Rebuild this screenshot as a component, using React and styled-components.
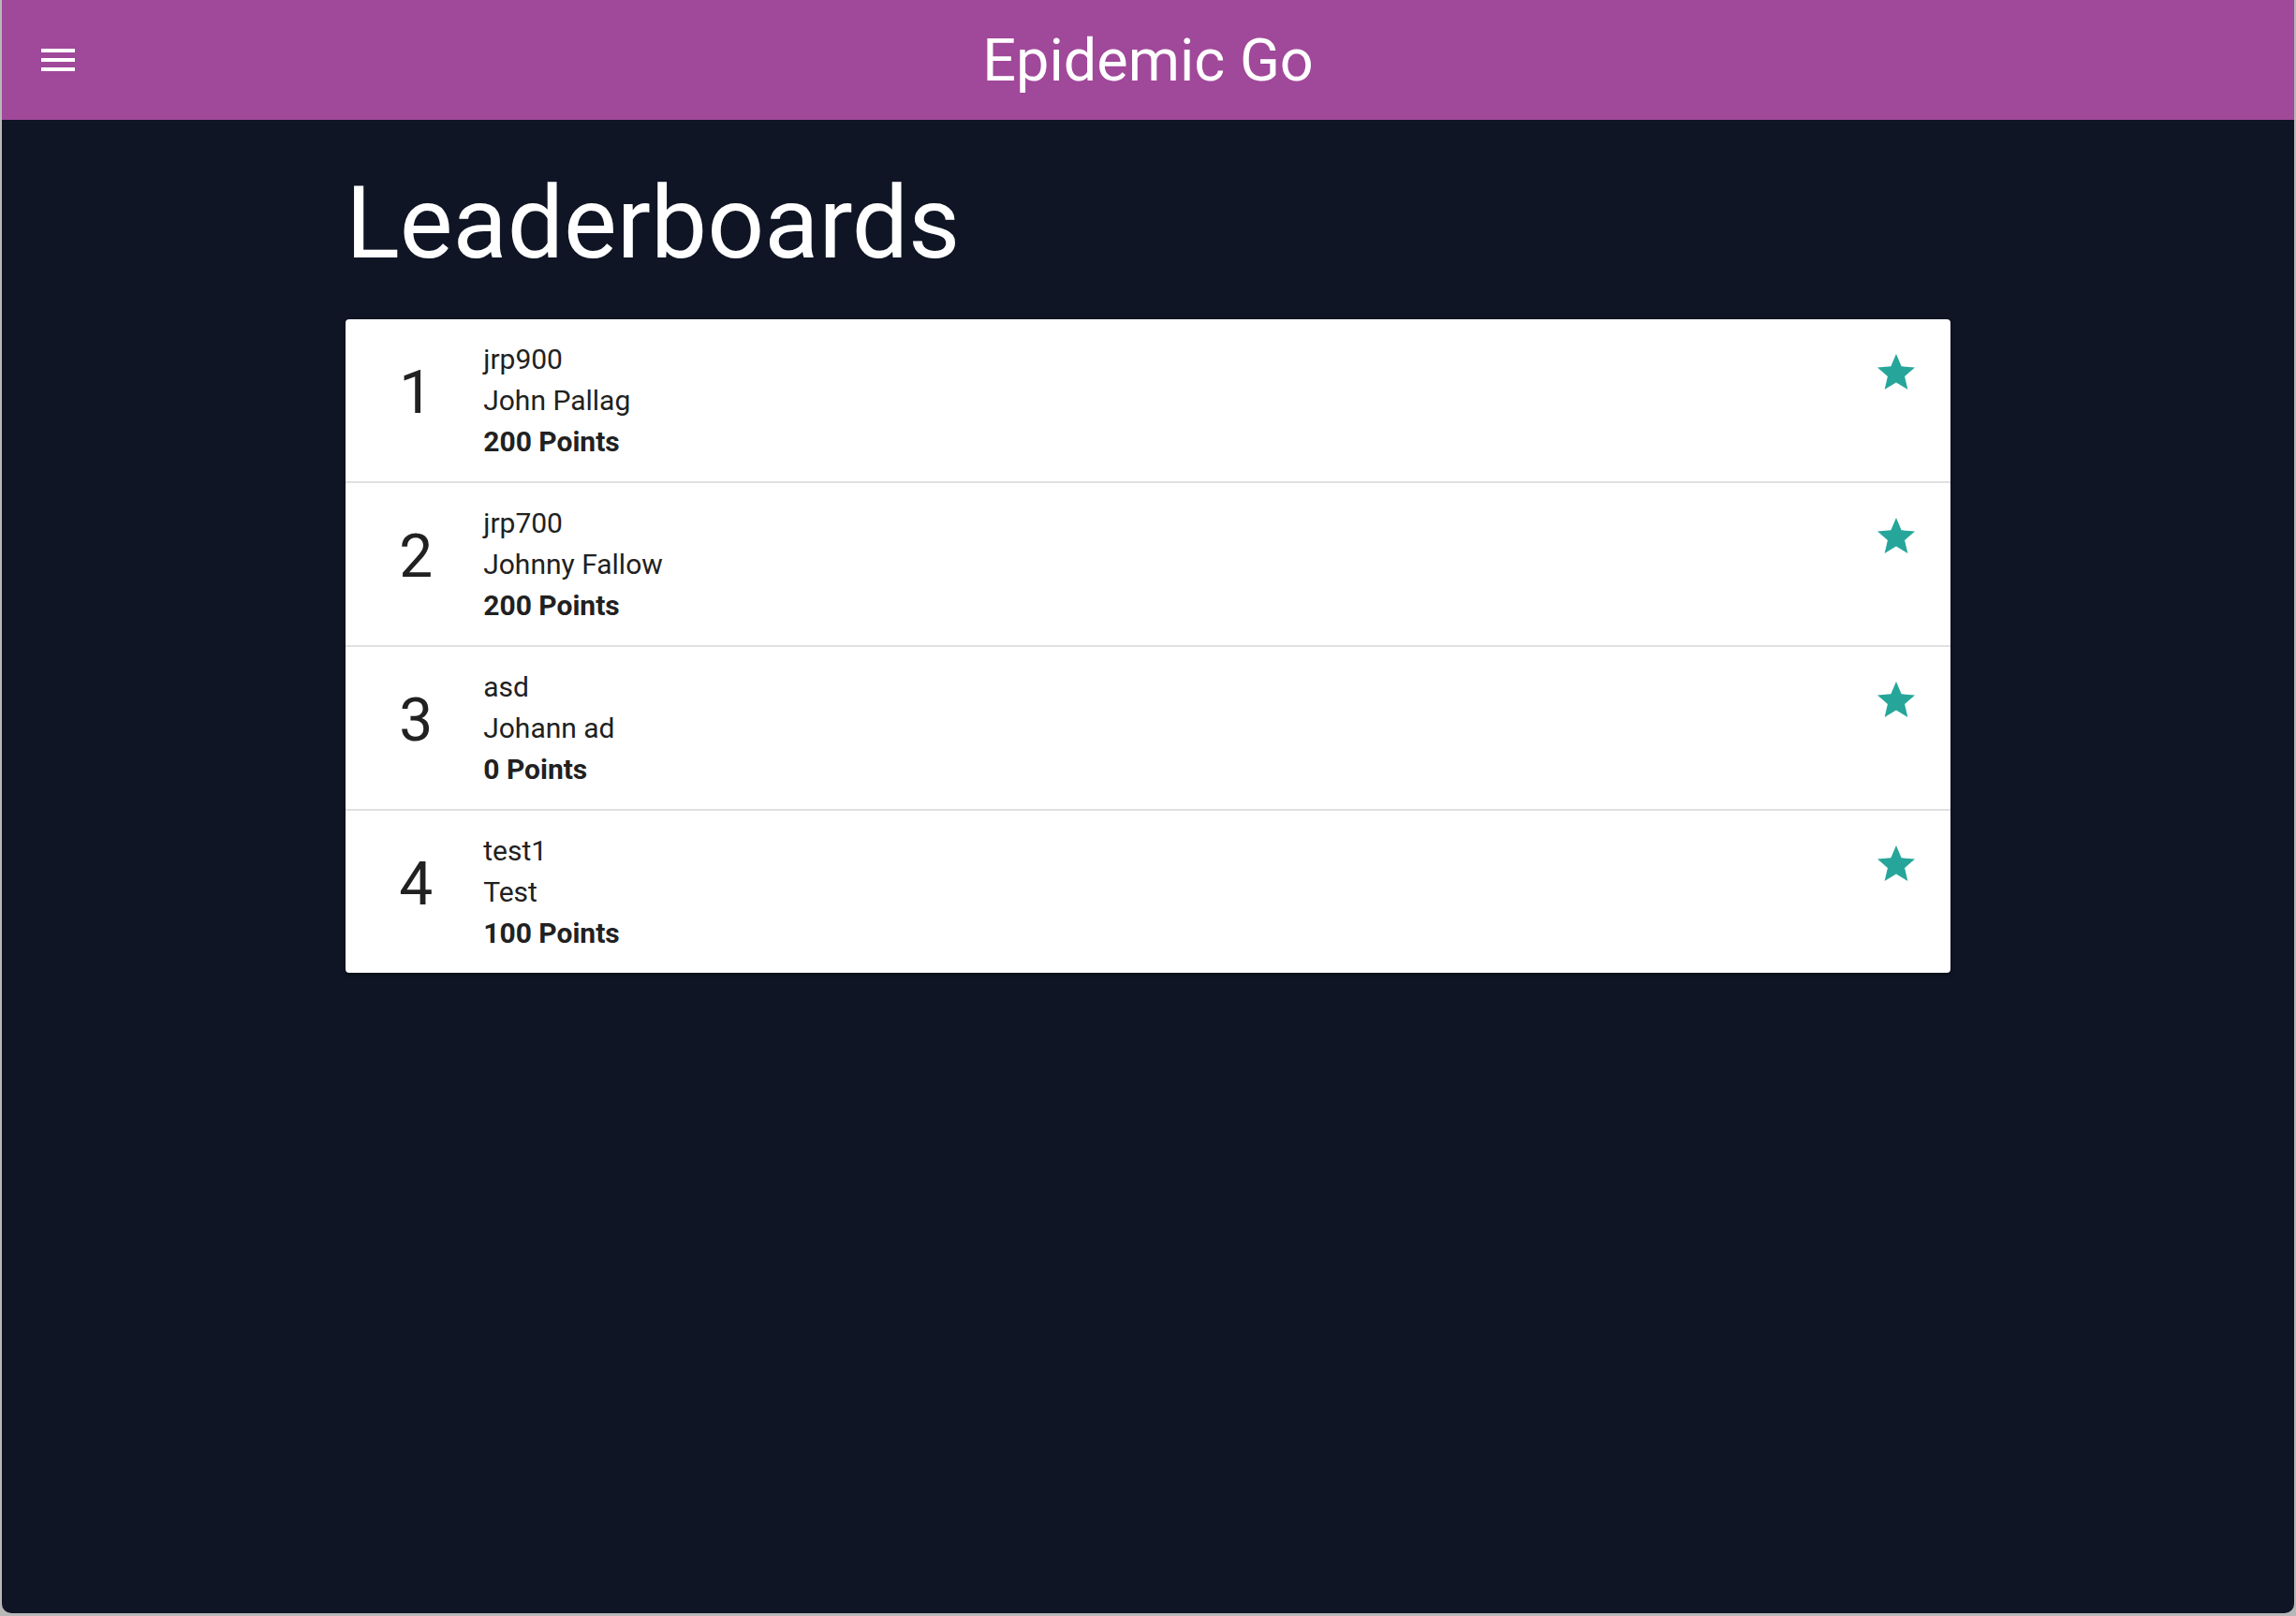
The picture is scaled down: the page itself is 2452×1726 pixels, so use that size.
import React from "react";
import styled, { createGlobalStyle } from "styled-components";

const GlobalStyle = createGlobalStyle`
  html, body {
    margin: 0;
    padding: 0;
    background: #b8b8b8;
  }
  body {
    font-family: Roboto, "Liberation Sans", Arial, sans-serif;
  }
`;

const Window = styled.div`
  margin-left: 2px;
  width: 2448px;
  height: 1723px;
  background: #0f1524;
  border-bottom-left-radius: 10px;
  border-bottom-right-radius: 10px;
  overflow: hidden;
  display: flex;
  flex-direction: column;
`;

const Toolbar = styled.header`
  position: relative;
  height: 128px;
  flex: none;
  background: #a0489a;
  display: flex;
  align-items: center;
  justify-content: center;
`;

const MenuButton = styled.button`
  position: absolute;
  left: 36px;
  top: 40px;
  width: 48px;
  height: 48px;
  padding: 0;
  border: 0;
  background: transparent;
  color: #ffffff;
  display: flex;
  align-items: center;
  justify-content: center;
  cursor: pointer;
`;

const AppTitle = styled.h1`
  margin: 0;
  color: #ffffff;
  font-family: Roboto, "Liberation Sans", Arial, sans-serif;
  font-weight: 400;
  font-size: 63px;
  line-height: 1;
`;

const Content = styled.main`
  width: 70%;
  margin: 0 auto;
  padding-top: 44px;
  display: flex;
  flex-direction: column;
`;

const PageTitle = styled.h2`
  margin: 0 0 35px 0;
  color: #ffffff;
  font-family: Roboto, "Liberation Sans", Arial, sans-serif;
  font-weight: 400;
  font-size: 107px;
  line-height: 134px;
`;

const Card = styled.ul`
  list-style: none;
  margin: 0;
  padding: 0;
  background: #ffffff;
  border-radius: 4px;
  box-shadow: 0 2px 4px rgba(0, 0, 0, 0.3);
  overflow: hidden;
`;

const Row = styled.li`
  display: flex;
  align-items: flex-start;
  padding: 21px 32px 20px 57px;
  border-top: ${(p) => (p.$first ? "none" : "2px solid #e0e0e0")};
`;

const Rank = styled.div`
  width: 36px;
  flex: none;
  align-self: center;
  margin-bottom: 18px;
  text-align: center;
  color: #212121;
  font-size: 64px;
  line-height: 75px;
  font-weight: 400;
`;

const Info = styled.div`
  flex: 1;
  margin-left: 54px;
  display: flex;
  flex-direction: column;
`;

const Line = styled.div`
  color: #212121;
  font-size: 30px;
  line-height: 44px;
  font-weight: ${(p) => (p.$bold ? 700 : 400)};
`;

const StarIcon = styled.svg`
  flex: none;
  width: 48px;
  height: 48px;
  margin-top: 12px;
  margin-right: 2px;
  fill: #26a69a;
`;

const players = [
  { rank: 1, user: "jrp900", name: "John Pallag", points: 200 },
  { rank: 2, user: "jrp700", name: "Johnny Fallow", points: 200 },
  { rank: 3, user: "asd", name: "Johann ad", points: 0 },
  { rank: 4, user: "test1", name: "Test", points: 100 },
];

export default function App() {
  return (
    <>
      <GlobalStyle />
      <Window>
        <Toolbar>
          <MenuButton aria-label="menu">
            <svg width="48" height="48" viewBox="0 0 24 24" fill="#ffffff">
              <path d="M3 18h18v-2H3v2zm0-5h18v-2H3v2zm0-7v2h18V6H3z" />
            </svg>
          </MenuButton>
          <AppTitle>Epidemic Go</AppTitle>
        </Toolbar>
        <Content>
          <PageTitle>Leaderboards</PageTitle>
          <Card>
            {players.map((p, i) => (
              <Row key={p.rank} $first={i === 0}>
                <Rank>{p.rank}</Rank>
                <Info>
                  <Line>{p.user}</Line>
                  <Line>{p.name}</Line>
                  <Line $bold>{p.points} Points</Line>
                </Info>
                <StarIcon viewBox="0 0 24 24">
                  <path d="M12 17.27L18.18 21l-1.64-7.03L22 9.24l-7.19-.61L12 2 9.19 8.63 2 9.24l5.46 4.73L5.82 21z" />
                </StarIcon>
              </Row>
            ))}
          </Card>
        </Content>
      </Window>
    </>
  );
}
